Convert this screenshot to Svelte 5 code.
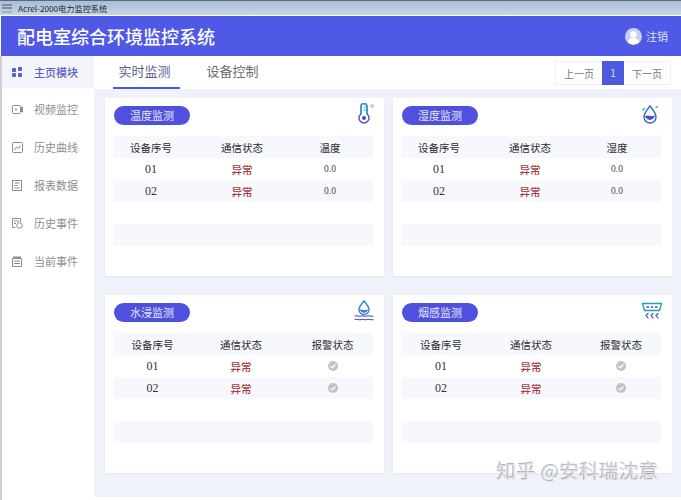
<script>
	const menu = [
		{ name: '主页模块', icon: 'grid' },
		{ name: '视频监控', icon: 'video' },
		{ name: '历史曲线', icon: 'curve' },
		{ name: '报表数据', icon: 'report' },
		{ name: '历史事件', icon: 'history' },
		{ name: '当前事件', icon: 'current' }
	]

	const panels = [
		{ title: '温度监测', icon: 'thermo', cols: '76px 106px 70px', head: ['设备序号', '通信状态', '温度'], value: '0.0' },
		{ title: '湿度监测', icon: 'humid', cols: '76px 106px 68px', head: ['设备序号', '通信状态', '湿度'], value: '0.0' },
		{ title: '水浸监测', icon: 'flood', cols: '79px 98px 85px', head: ['设备序号', '通信状态', '报警状态'], value: null },
		{ title: '烟感监测', icon: 'smoke', cols: '80px 100px 80px', head: ['设备序号', '通信状态', '报警状态'], value: null }
	]
</script>

<div class="window">
	<div class="titlebar">
		<svg class="app-icon" width="11" height="9" viewBox="0 0 11 9"><path d="M0 1h10M0 4h10" stroke="#8a8a92" stroke-width="2" /><path d="M0 8h10" stroke="#7f95b5" /></svg>
		<span>Acrel-2000电力监控系统</span>
	</div>

	<header>
		<h1>配电室综合环境监控系统</h1>
		<div class="user">
			<svg width="17" height="17" viewBox="0 0 17 17">
				<circle cx="8.5" cy="8.5" r="8.5" fill="#c9cdf2" />
				<circle cx="8.5" cy="6.5" r="3.2" fill="#fff" />
				<path d="M3 14.5c.6-3.4 2.8-4.6 5.5-4.6s4.900 1.200 5.500 4.600a8.500 8.500 0 0 1-11 0z" fill="#fff" />
			</svg>
			<span>注销</span>
		</div>
	</header>

	<div class="body">
		<nav>
			{#each menu as item, i}
				<div class="menu-item" class:active={i === 0}>
					<svg width="11" height="11" viewBox="0 0 11 11" fill="none" stroke="currentColor">
						{#if item.icon === 'grid'}
							<g fill="currentColor" stroke="none">
								<rect x="0" y="1" width="4" height="4" rx="1" />
								<rect x="6" y="0" width="4" height="4" rx="1" />
								<rect x="0" y="6" width="4" height="4" rx="1" />
								<rect x="6" y="6" width="4" height="4" rx="1" />
							</g>
						{:else if item.icon === 'video'}
							<rect x="0.500" y="1.500" width="8" height="8" rx="1" />
							<path d="M8.500 4l2-1v5l-2-1z" fill="currentColor" />
							<circle cx="4" cy="5.500" r="1" fill="currentColor" stroke="none" />
						{:else if item.icon === 'curve'}
							<rect x="0.500" y="0.500" width="10" height="10" rx="1" />
							<path d="M2.500 8l2-3 2 1.500 2-3" />
						{:else if item.icon === 'report'}
							<rect x="0.500" y="0.500" width="9" height="10" />
							<path d="M2.500 3h5M2.500 5.500h3M2.500 8h5" />
						{:else if item.icon === 'history'}
							<path d="M8.500 4V.5h-8v9h3" />
							<circle cx="7.500" cy="7.500" r="2.800" />
							<path d="M2 3h5M2 5.500h2" />
						{:else}
							<path d="M1 .5h8v2H1z" fill="currentColor" stroke="none" />
							<path d="M.5 2.500h9v8h-9zM2 5h6M2 7.500h6" />
						{/if}
					</svg>
					<span>{item.name}</span>
				</div>
			{/each}
		</nav>

		<main>
			<div class="tabs">
				<div class="tab current">实时监测</div>
				<div class="tab">设备控制</div>
				<div class="pager">
					<span class="page-btn">上一页</span>
					<span class="page-num">1</span>
					<span class="page-btn">下一页</span>
				</div>
			</div>

			<div class="panels">
				{#each panels as panel}
					<section class="card">
						<div class="card-top">
							<span class="pill">{panel.title}</span>
							<svg class="card-icon" width="22" height="22" viewBox="0 0 22 22" fill="none" stroke-linecap="round">
								{#if panel.icon === 'thermo'}
									<path d="M8 11V3.500a3 3 0 0 1 6 0V11a5 5 0 1 1-6 0z" stroke="#5b55c8" stroke-width="1.500" />
									<path d="M8 11V3.500a3 3 0 0 1 6 0V11" stroke="#2fa3c9" stroke-width="1.500" />
									<path d="M11 4h3M11 7h3" stroke="#2fa3c9" />
									<circle cx="11" cy="15" r="2" fill="#5b3fb8" />
									<circle cx="19" cy="3" r="1.300" stroke="#9aa3b5" stroke-width="0.800" />
								{:else if panel.icon === 'humid'}
									<path d="M9 3c3 4 6 7 6 11a6 6 0 0 1-12 0c0-4 3-7 6-11z" stroke="#2f6fc9" stroke-width="1.400" />
									<path d="M4.500 13.500c3-1.500 6 1 9-.5a4.800 4.800 0 0 1-9 .5z" fill="#5a45c8" stroke="#5a45c8" />
									<path d="M2 7l1.500-1.500M15 4.500l1.500-1" stroke="#38a8d0" stroke-width="1.500" />
								{:else if panel.icon === 'flood'}
									<path d="M11 1c2.500 3.500 5 5.500 5 8.500a5 5 0 0 1-10 0C6 6.500 8.500 4.500 11 1z" stroke="#2f8bc9" stroke-width="1.400" />
									<path d="M7.500 10c2 .8 5 .8 7 0a3.800 3.800 0 0 1-7 0z" fill="#3c79cc" stroke="#3c79cc" />
									<path d="M2 16c2.200-1.200 3.800 1.200 6 0s3.800 1.200 6 0 3.800 1.200 6 0M2 19.500c2.200-1.200 3.800 1.200 6 0s3.800 1.200 6 0 3.800 1.200 6 0" stroke="#5a45c0" stroke-width="1.100" />
								{:else}
									<path d="M1.500 3.500h19l-2 7h-15z" stroke="#25a0b8" stroke-width="1.400" stroke-linejoin="round" />
									<path d="M6 7h1.500M10.200 7h1.500M14.500 7h1.500" stroke="#4a50c0" stroke-width="1.500" />
									<path d="M7 13.500l-2 2 2 2.500M12 13.500l-2 2 2 2.500M17 13.500l-2 2 2 2.500" stroke="#4a50c0" stroke-width="1.200" />
								{/if}
							</svg>
						</div>

						<div class="table">
							<div class="row head" style="grid-template-columns: {panel.cols}">
								{#each panel.head as label}
									<span>{label}</span>
								{/each}
							</div>
							{#each ['01', '02'] as code}
								<div class="row" style="grid-template-columns: {panel.cols}">
									<span class="code">{code}</span>
									<span class="bad">异常</span>
									{#if panel.value}
										<span class="value">{panel.value}</span>
									{:else}
										<span class="ok">
											<svg width="10" height="10" viewBox="0 0 10 10">
												<circle cx="5" cy="5" r="5" fill="#c4c4c4" />
												<path d="M2.600 5.100l1.700 1.700 3.100-3.300" fill="none" stroke="#fff" stroke-width="1.200" />
											</svg>
										</span>
									{/if}
								</div>
							{/each}
							<div class="row"></div>
							<div class="row"></div>
						</div>
					</section>
				{/each}
			</div>
		</main>
	</div>

	<div class="watermark">知乎 @安科瑞沈意</div>
</div>

<style>
	:global(body) {
		background: #fff;
	}
	.window {
		position: relative;
		width: 681px;
		height: 500px;
		overflow: hidden;
		font-family: 'Noto Sans CJK SC', 'Noto Sans', sans-serif;
		background: #fff;
	}
	.titlebar {
		height: 15px;
		display: flex;
		align-items: center;
		gap: 5px;
		padding-left: 2px;
		font-size: 8.200px;
		color: #1e2530;
		border-top: 1px solid #5c6b7c;
		box-sizing: border-box;
		background: linear-gradient(#a9bed4, #c5d6e8);
	}
	.titlebar span {
		line-height: 12px;
	}
	header {
		height: 40px;
		margin: 1px 0 0 1px;
		padding: 0 13px 0 16px;
		display: flex;
		align-items: center;
		justify-content: space-between;
		background: #5058e6;
		color: #fff;
	}
	h1 {
		margin: 0;
		font-size: 18px;
		font-weight: 500;
		line-height: 40px;
	}
	.user {
		display: flex;
		align-items: center;
		gap: 4px;
		font-size: 11px;
		color: #dfe1fa;
	}
	.body {
		display: flex;
		height: 444px;
	}
	nav {
		width: 92px;
		flex: none;
		border-left: 2px solid #cfcfd4;
		box-sizing: content-box;
		background: #fff;
	}
	.menu-item {
		height: 38px;
		display: flex;
		align-items: center;
		gap: 11px;
		padding-left: 10px;
		font-size: 11px;
		color: #8d8d93;
	}
	.menu-item.active {
		height: 32px;
		margin-bottom: 2px;
		color: #5a60c4;
		font-weight: 500;
		background: #f3f4fc;
	}
	main {
		flex: 1;
		min-width: 0;
		margin-bottom: 3px;
		background: #eff2fa;
	}
	.tabs {
		height: 33px;
		display: flex;
		background: #fff;
		padding-left: 19px;
		position: relative;
	}
	.tab {
		width: 67px;
		margin-right: 21px;
		padding-right: 4px;
		box-sizing: border-box;
		text-align: center;
		font-size: 13px;
		line-height: 30px;
		color: #6c6c72;
	}
	.tab.current {
		color: #5b5f8e;
		border-bottom: 2px solid #4f57d8;
		height: 33px;
	}
	.pager {
		margin: 5px 0 0 auto;
		margin-right: 10px;
		height: 24px;
		display: flex;
		align-items: center;
		font-size: 10px;
		color: #77777c;
		border: 1px solid #f0f0f4;
		box-sizing: border-box;
	}
	.page-btn {
		width: 46px;
		text-align: center;
	}
	.page-num {
		width: 22px;
		height: 24px;
		line-height: 24px;
		text-align: center;
		background: #4f59dc;
		color: #d9dcfa;
	}
	.panels {
		display: grid;
		grid-template-columns: 279px 279px;
		grid-auto-rows: 178px;
		gap: 19px 9px;
		padding: 9px 0 0 11px;
	}
	.card {
		background: #fff;
		padding: 0 11px 0 8px;
		box-shadow: 0 1px 2px rgba(180, 190, 220, 0.2);
	}
	.card-top {
		height: 38px;
		display: flex;
		align-items: flex-start;
		justify-content: space-between;
	}
	.pill {
		margin: 8px 0 0 1px;
		width: 76px;
		height: 19px;
		line-height: 18px;
		text-align: center;
		font-size: 11px;
		color: #e4e5fd;
		border-radius: 10px;
		background: #4f50dc;
	}
	.card-icon {
		margin: 5px -2px 0 0;
	}
	.table {
		font-size: 11px;
		color: #333;
	}
	.row {
		display: grid;
		align-items: center;
		height: 22px;
		text-align: center;
	}
	.row:nth-child(odd) {
		background: #f7f8fd;
	}
	.head span {
		color: #2e2e33;
		font-size: 10.500px;
	}
	.code {
		font-family: 'Liberation Serif', serif;
		font-size: 12px;
		color: #333;
	}
	.bad {
		color: #a83c42;
		font-weight: 500;
		font-size: 10.500px;
		padding-top: 1px;
	}
	.value {
		font-family: 'Liberation Serif', serif;
		font-size: 9.500px;
		color: #444;
	}
	.ok {
		display: flex;
		justify-content: center;
	}
	.watermark {
		position: absolute;
		left: 497px;
		top: 458px;
		font-size: 19.500px;
		line-height: 26px;
		letter-spacing: 0.300px;
		white-space: nowrap;
		color: rgba(222, 224, 230, 0.85);
		text-shadow: -1px -1px 0 rgba(110, 110, 115, 0.5);
	}
</style>
